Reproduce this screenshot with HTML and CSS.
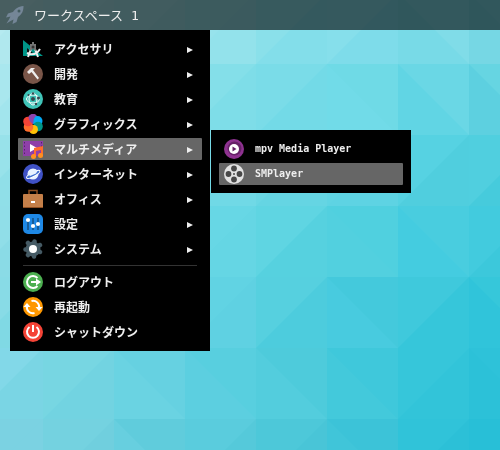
FILE: index.html
```html
<!DOCTYPE html>
<html lang="ja">
<head>
    <meta charset="UTF-8">
    <meta name="viewport" content="width=device-width, initial-scale=1.0">
    <title>ワークスペース 1</title>
    <link rel="stylesheet" href="styles.css">
</head>
<body>
    <svg class="wallpaper" id="wallpaper" viewBox="0 0 500 450" preserveAspectRatio="xMinYMin slice" aria-hidden="true"></svg>

    <header class="panel">
        <svg class="rocket" viewBox="0 0 20 20">
            <path fill="#748697" d="M18.500 1C13 1.500 10.500 3.500 8 7L3 8.500 1 12.500 5.500 11.500 4 14.500 1.500 18.500 5.500 16 8.500 14.500 7.500 19 11.500 17 13 12C16.500 9.500 18.500 6.500 18.500 1Z"/>
            <circle cx="14" cy="6" r="1.500" fill="#435c60"/>
        </svg>
        <span>ワークスペース 1</span>
    </header>

    <nav class="menus">
        <div class="menu">
            <button type="button" class="item">
                <svg class="icon" viewBox="0 0 20 20">
                    <path fill="#009688" d="M0 1 20 17H0Z"/>
                    <path fill="#111" d="M4 9 10 14H4Z"/>
                    <path stroke="#eee" stroke-width="2" fill="none" d="M8 10 5 18M12 10 15 18M4 14Q12 18 17 10"/>
                    <path fill="#757575" d="M9 3h2v2h2v7l-3-2-3 2V5h2Z"/>
                    <circle cx="10" cy="8" r="1.500" fill="#333"/>
                </svg>
                <span class="label">アクセサリ</span><span class="arrow"></span>
            </button>
            <button type="button" class="item">
                <svg class="icon" viewBox="0 0 20 20">
                    <circle cx="10" cy="10" r="10" fill="#795548"/>
                    <path fill="#eee" d="M4 8 8 4 12 4 10 6 16 14 14.500 15.500 8.500 8 6 10Z"/>
                </svg>
                <span class="label">開発</span><span class="arrow"></span>
            </button>
            <button type="button" class="item">
                <svg class="icon" viewBox="0 0 20 20">
                    <circle cx="10" cy="10" r="10" fill="#40c4b8"/>
                    <g fill="none" stroke="#fff">
                        <ellipse cx="10" cy="10" rx="4" ry="6"/>
                        <ellipse cx="10" cy="10" rx="6.500" ry="4"/>
                    </g>
                    <g fill="#37474f">
                        <circle cx="10" cy="10" r="2"/>
                        <circle cx="10" cy="4.500" r="1.200"/>
                        <circle cx="15.500" cy="9" r="1.500"/>
                        <circle cx="5.500" cy="6" r="1"/>
                        <circle cx="13" cy="15" r="1.200"/>
                    </g>
                </svg>
                <span class="label">教育</span><span class="arrow"></span>
            </button>
            <button type="button" class="item">
                <svg class="icon" viewBox="0 0 20 20">
                    <circle cx="10" cy="5" r="5" fill="#8e44ad"/>
                    <circle cx="14.500" cy="7" r="5" fill="#03a9f4"/>
                    <circle cx="15" cy="12.500" r="4.800" fill="#009688"/>
                    <circle cx="10.500" cy="15.500" r="4.500" fill="#ffc107"/>
                    <circle cx="5.500" cy="13" r="4.800" fill="#ff6d2d"/>
                    <circle cx="5" cy="7.500" r="4.800" fill="#f44336"/>
                    <path fill="#8e44ad" d="M5.500 3A5 5 0 0 1 13 1Q10 5 10 10Q6 8 5.500 3Z"/>
                </svg>
                <span class="label">グラフィックス</span><span class="arrow"></span>
            </button>
            <button type="button" class="item active" aria-expanded="true">
                <svg class="icon" viewBox="0 0 20 20">
                    <path fill="#8e3fa8" d="M0 2h20v15H0Z"/>
                    <path stroke="#55246b" stroke-dasharray="1.500 2" d="M1.500 3v14M18.500 3v14"/>
                    <path fill="#fff" d="M7 5 14 9 7 13Z"/>
                    <path fill="#ff6d2d" d="M11 9 20 7v10h-2v-6l-5 1v6h-2Z"/>
                    <circle cx="10.500" cy="17.500" r="2.500" fill="#ff9020"/>
                    <circle cx="17.500" cy="16.500" r="2.500" fill="#ff9020"/>
                </svg>
                <span class="label">マルチメディア</span><span class="arrow"></span>
            </button>
            <button type="button" class="item">
                <svg class="icon" viewBox="0 0 20 20">
                    <circle cx="10" cy="10" r="10" fill="#3f51c5"/>
                    <circle cx="10" cy="10" r="5.500" fill="#e8f2ff"/>
                    <ellipse cx="10" cy="10.500" rx="7.500" ry="2" transform="rotate(-28 10 10)" fill="#3f6fd0" stroke="#fff"/>
                    <path fill="#e8f2ff" d="M4.800 10A5.500 5.500 0 0 1 14.500 7L13 9.500 7 12Z"/>
                </svg>
                <span class="label">インターネット</span><span class="arrow"></span>
            </button>
            <button type="button" class="item">
                <svg class="icon" viewBox="0 0 20 20">
                    <path fill="none" stroke="#8d4d20" stroke-width="1.500" d="M6 6V1.500h8V6"/>
                    <rect y="5" width="20" height="14" rx="1" fill="#c47f49"/>
                    <path fill="#8d4d20" d="M0 18h20v1H0Z"/>
                    <rect x="8" y="12" width="4" height="2" fill="#fff"/>
                </svg>
                <span class="label">オフィス</span><span class="arrow"></span>
            </button>
            <button type="button" class="item">
                <svg class="icon" viewBox="0 0 20 20">
                    <rect width="20" height="20" rx="5" fill="#1e88e5"/>
                    <path stroke="#174f80" stroke-width="1.500" d="M5 4v12M10 4v12M15 4v12"/>
                    <g fill="#fff">
                        <circle cx="5" cy="6" r="2.100"/>
                        <circle cx="10" cy="12" r="2.100"/>
                        <circle cx="15" cy="10" r="2.100"/>
                    </g>
                </svg>
                <span class="label">設定</span><span class="arrow"></span>
            </button>
            <button type="button" class="item">
                <svg class="icon" viewBox="0 0 20 20">
                    <circle cx="10" cy="10" r="7.500" fill="#455a64"/>
                    <path stroke="#455a64" stroke-width="4.500" stroke-linecap="round" d="M10 10 11.500 2.500M10 10 17 6M10 10 17 13M10 10 11 17.500M10 10 5 16M10 10 2.500 10.500M10 10 5 4"/>
                    <circle cx="10" cy="10" r="4" fill="#fff"/>
                </svg>
                <span class="label">システム</span><span class="arrow"></span>
            </button>
            <hr class="separator">
            <button type="button" class="item">
                <svg class="icon" viewBox="0 0 20 20">
                    <circle cx="10" cy="10" r="10" fill="#4caf50"/>
                    <path fill="none" stroke="#fff" stroke-width="2" d="M14.500 6A6 6 0 1 0 14.500 14M8 10h6"/>
                    <path fill="#fff" d="M13 6.500 18 10 13 13.500Z"/>
                </svg>
                <span class="label">ログアウト</span>
            </button>
            <button type="button" class="item">
                <svg class="icon" viewBox="0 0 20 20">
                    <circle cx="10" cy="10" r="10" fill="#ff9800"/>
                    <path fill="none" stroke="#fff" stroke-width="2" d="M8.500 4A6 6 0 0 1 16 11M11.500 16A6 6 0 0 1 4 9"/>
                    <path fill="#fff" d="M12.500 10h7L16 14ZM.500 10h7L4 6Z"/>
                </svg>
                <span class="label">再起動</span>
            </button>
            <button type="button" class="item">
                <svg class="icon" viewBox="0 0 20 20">
                    <circle cx="10" cy="10" r="10" fill="#f44336"/>
                    <path fill="none" stroke="#fff" stroke-width="2" d="M6.500 5A6 6 0 1 0 13.500 5M10 3v7"/>
                </svg>
                <span class="label">シャットダウン</span>
            </button>
        </div>

        <div class="menu submenu">
            <button type="button" class="item">
                <svg class="icon" viewBox="0 0 20 20">
                    <circle cx="10" cy="10" r="10" fill="#8e3290"/>
                    <circle cx="10.500" cy="9.500" r="7" fill="#672168"/>
                    <circle cx="10" cy="10" r="5" fill="#fff"/>
                    <path fill="#672168" d="M8.500 7.500 12.500 10 8.500 12.500Z"/>
                </svg>
                <span class="label">mpv Media Player</span>
            </button>
            <button type="button" class="item active">
                <svg class="icon" viewBox="0 0 20 20">
                    <circle cx="10" cy="10" r="10" fill="#e2e2e2"/>
                    <g fill="#484848">
                        <circle cx="10" cy="4.500" r="2.900"/>
                        <circle cx="15.500" cy="10" r="2.900"/>
                        <circle cx="10" cy="15.500" r="2.900"/>
                        <circle cx="4.500" cy="10" r="2.900"/>
                        <circle cx="10" cy="10" r="1"/>
                    </g>
                </svg>
                <span class="label">SMPlayer</span>
            </button>
        </div>
    </nav>
    <script src="wallpaper.js"></script>
</body>
</html>
```
FILE: styles.css
```css
body {
    margin: 0;
    min-height: 100vh;
    background-color: #5ccfe0;
    color: #eee;
    font-family: "DejaVu Sans Mono", "Noto Sans CJK JP", monospace;
    overflow: hidden;
}
/* sits behind everything */
.wallpaper {
    position: fixed;
    inset: 0;
    width: 100%;
    height: 100%;
    z-index: -1;
}
.panel {
    display: flex;
    align-items: center;
    gap: 9px;
    height: 30px;
    padding: 0 5px;
    background-color: rgba(0, 0, 0, 0.6);
    font-size: 13px;
    line-height: 21px;
}
.rocket, .icon {
    width: 20px;
    height: 20px;
    flex: none;
}
.menus {
    display: flex;
    align-items: flex-start;
    gap: 1px;
    padding-left: 10px;
}
.menu {
    box-sizing: border-box;
    display: flex;
    flex-direction: column;
    gap: 3px;
    width: 200px;
    padding: 8px;
    background-color: #000;
}
.item {
    display: flex;
    align-items: center;
    height: 22px;
    padding: 0 9px 0 5px;
    border: none;
    border-radius: 1px;
    background: none;
    color: inherit;
    font-family: "Noto Sans CJK JP", sans-serif;
    font-size: 12px;
    font-weight: bold;
    line-height: 18px;
    text-align: left;
}
.item:hover, .active {
    background-color: #666;
}
.label {
    flex: 1;
    margin-left: 11px;
}
.arrow {
    margin-top: 2px;
    border: 3px solid transparent;
    border-left: 6px solid #eee;
    border-right: none;
}
.separator {
    width: 174px;
    height: 1px;
    margin: 2px 5px;
    border: none;
    background-color: #333;
}
/* lines up with the open entry */
.submenu {
    margin-top: 100px;
}
.submenu .item {
    font-family: "DejaVu Sans Mono", monospace;
    font-size: 10px;
}
```
FILE: wallpaper.js
```javascript
const CELL = 71;
const wallpaper = document.getElementById('wallpaper');

// direction of the diagonal, first colour (left side), second colour (right side)
const rows = [
    ['/b5eaf0,b0e8ee', '/abe8ef,a7e6ed', '/a2e5ed,9de4ec', '/97e3ec,93e2eb', '/8ae0ea,83deea', '/86dfeb,7edcea', '\\78dae7,80dce8', '\\76d7e4,7bdae6'],
    ['/a9e7ee,a2e5ed', '/9fe4ec,98e2eb', '/95e1ea,8ddfe9', '/84dfe9,7edde8', '/7adce8,73dae7', '\\71dbe8,6fdae6', '\\61d5e4,6ad7e5', '\\5dd0e0,66d5e2'],
    ['/98e2ea,90dfe8', '/8edfe8,88dde7', '/84dce7,7edbe6', '/76dae7,70d9e6', '/6ad7e4,65d5e3', '/60d4e3,5ed3e3', '/56d2e2,50cede', '/50cfdf,46cbdc'],
    ['/90dee8,8adbe6', '/8bdde8,84dbe6', '/7bdae6,72d8e4', '/67d7e5,65d6e4', '/5fd5e2,56d1df', '\\52d0df,50d0df', '\\44cce0,49cddf', '/42cbde,3cc8db'],
    ['/88dbe6,80d9e4', '/82dae5,7ad7e3', '/73d7e4,69d3e1', '/61d3e3,5fd1e2', '/56d0df,4dccdd', '\\48cbdf,44c9dc', '/3fc9dc,36c6da', '\\30c4da,36c7da'],
    ['/82d8e8,7ad5e4', '/77d6e2,72d3e1', '\\6ad3e2,66d1e1', '\\5ccfe0,58cfdf', '\\53cddd,4ecbdb', '\\43c9db,3fc8db', '/36c6da,32c4d9', '\\2cc1d8,2ec2d9'],
    ['/7bd2e2,7bd2e2', '/74d2e0,70cfde', '\\67cfdf,60ccdc', '/5accdd,55c9da', '/4dc8d9,49c5d7', '\\40c5d9,3cc3d8', '/30c3d9,2cc0d7', '/28bfd7,28bfd7']
];

function addShape(points, color) {
    const shape = document.createElementNS('http://www.w3.org/2000/svg', 'polygon');
    shape.setAttribute('points', points);
    shape.setAttribute('fill', '#' + color);
    wallpaper.appendChild(shape);
}

rows.forEach((cells, row) => {
    cells.forEach((cell, col) => {
        const x = col * CELL - 28;
        const y = row * CELL - 7;
        const r = x + CELL;
        const b = y + CELL;
        const [left, right] = cell.slice(1).split(',');
        // the left colour fills the square, the right one covers half of it
        addShape(`${x},${y} ${r},${y} ${r},${b} ${x},${b}`, left);
        if (cell[0] === '/') {
            addShape(`${r},${y} ${r},${b} ${x},${b}`, right);
        } else {
            addShape(`${x},${y} ${r},${y} ${r},${b}`, right);
        }
    });
});
```
